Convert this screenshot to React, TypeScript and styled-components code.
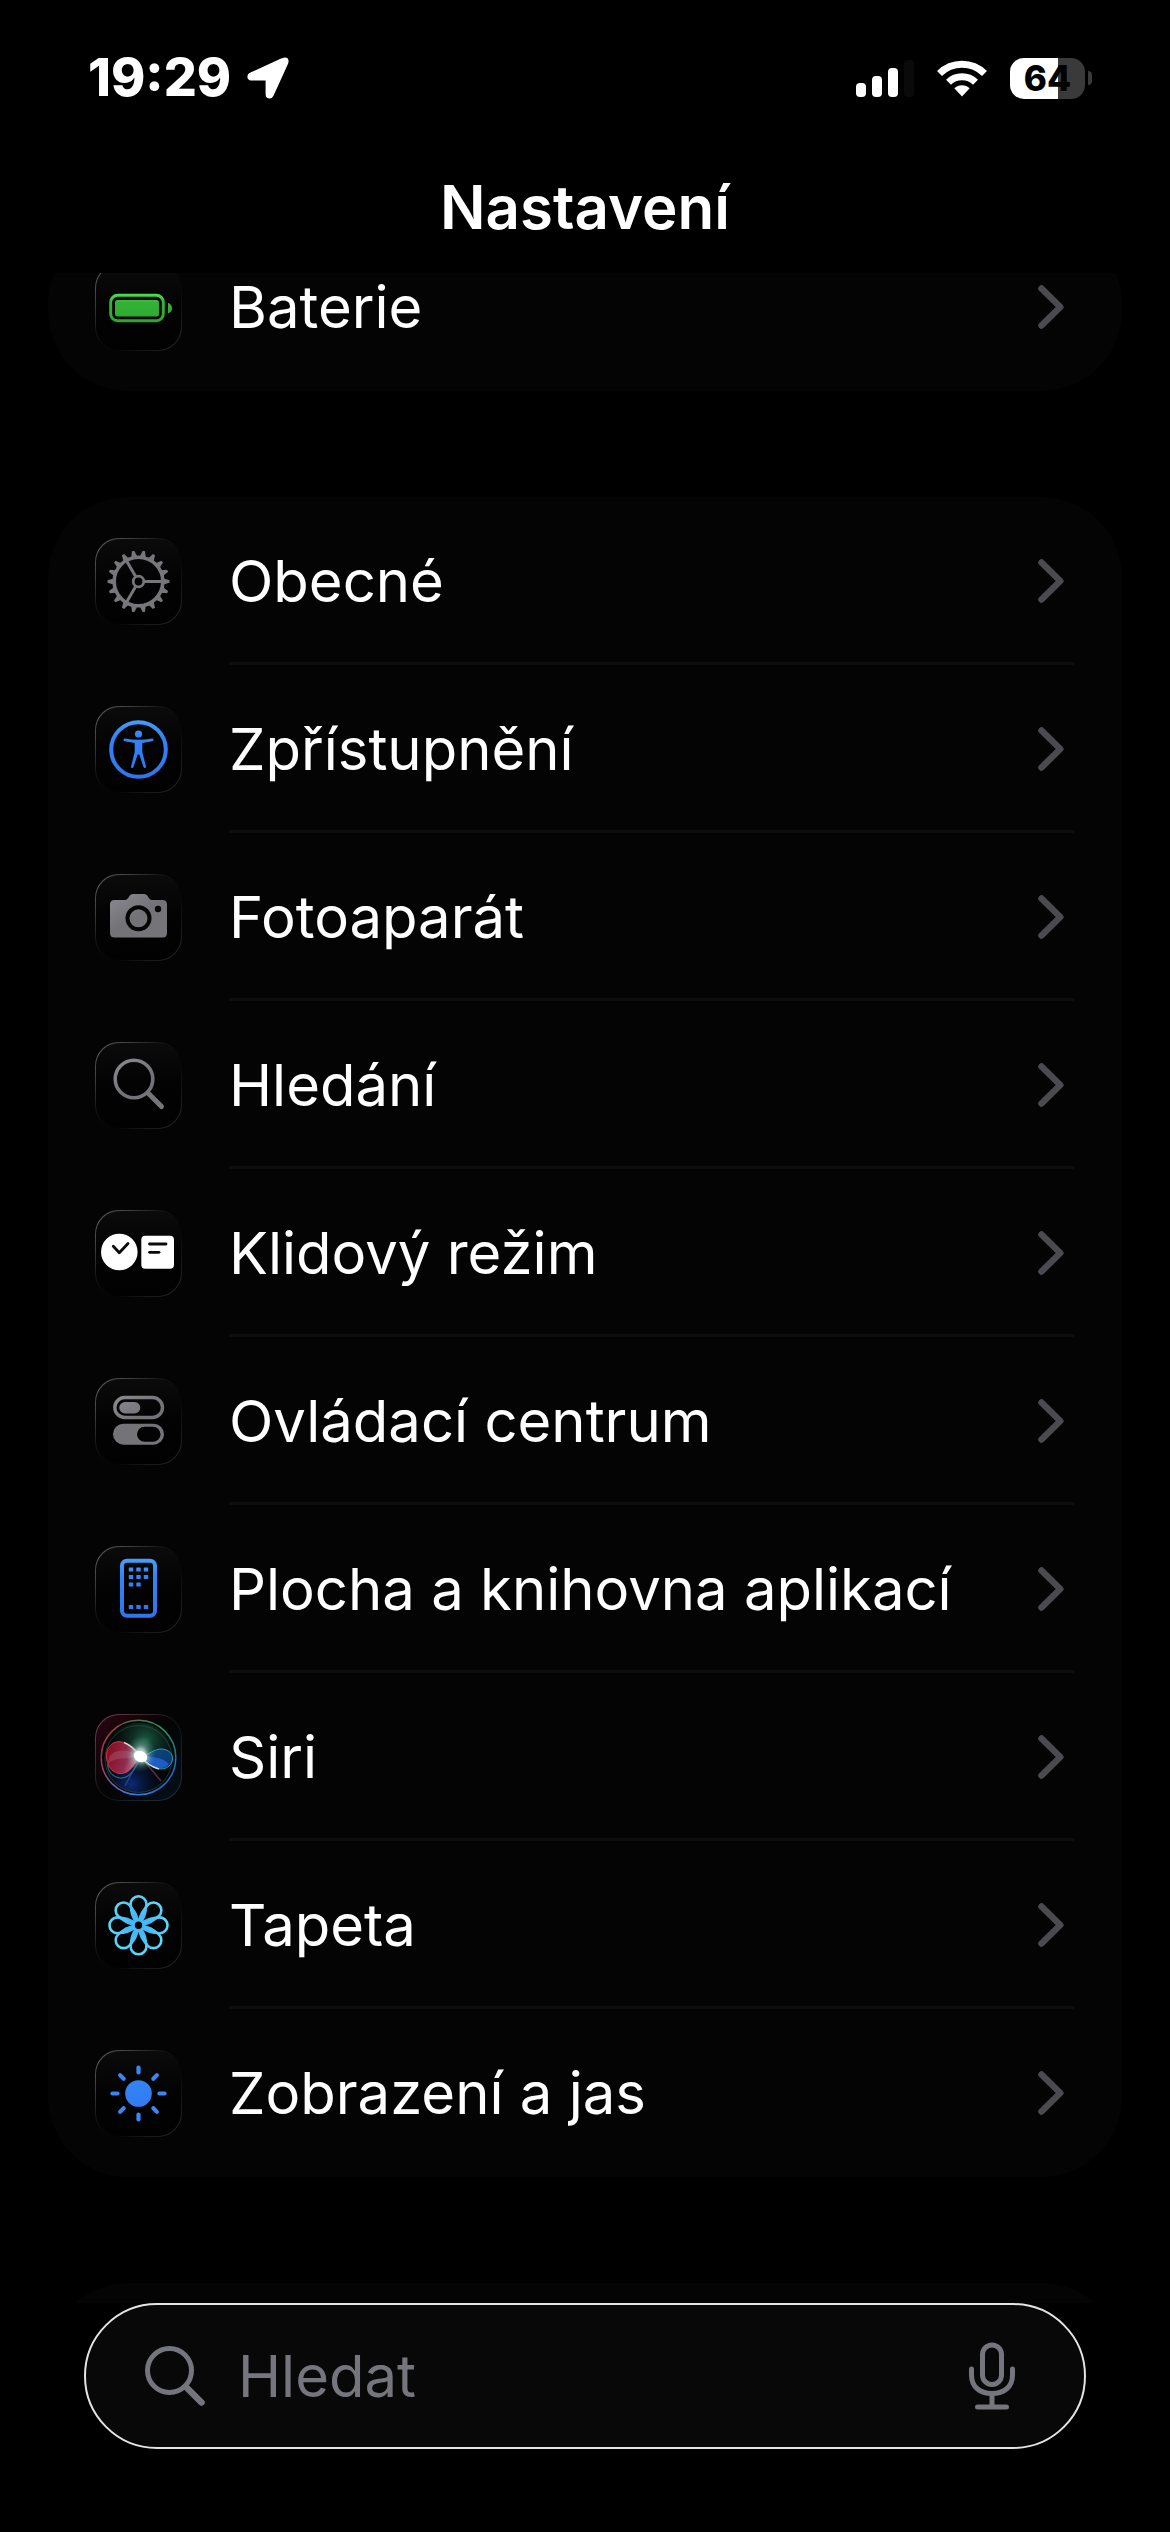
import React from "react";
import styled, { createGlobalStyle } from "styled-components";

const GlobalStyle = createGlobalStyle`
  * { box-sizing: border-box; }
  html, body { margin: 0; background: #000; }
  body { font-family: Inter, "Noto Sans", sans-serif; color: #fff; }
`;

const Screen = styled.div`
  display: grid;
  grid-template-columns: minmax(0, 1fr);
  grid-template-rows: auto minmax(0, 1fr) auto;
  height: 100vh;
  background: #000;
`;

const StatusBar = styled.div`
  display: flex;
  align-items: center;
  justify-content: space-between;
  height: 156px;
  padding: 0 78px 0 88px;
`;

const StatusGroup = styled.div<{ $gap: number }>`
  display: flex;
  align-items: center;
  gap: ${(p) => p.$gap}px;
`;

const Time = styled.time`
  font-size: 52px;
  line-height: 60px;
  font-weight: 800;
`;

const Battery = styled.div`
  display: flex;
  align-items: center;
  gap: 3px;
`;

const BatteryBody = styled.div<{ $level: number }>`
  display: flex;
  align-items: center;
  justify-content: center;
  width: 75px;
  height: 41px;
  border-radius: 14px;
  background: linear-gradient(90deg, #fff ${(p) => p.$level}%, #3a3a3a ${(p) => p.$level}%);
  color: #000;
  font-size: 35px;
  line-height: 40px;
  font-weight: 800;
`;

const BatteryNub = styled.div`
  width: 4px;
  height: 14px;
  border-radius: 0 8px 8px 0;
  background: #3a3a3a;
`;

const Title = styled.h1`
  margin: 0;
  padding: 15px 0 30px;
  font-size: 60px;
  line-height: 72px;
  font-weight: 600;
  text-align: center;
`;

const List = styled.main`
  display: flex;
  flex-direction: column;
  gap: 106px;
  padding: 0 48px;
  overflow: hidden;
`;

const Group = styled.ul<{ $scrolled?: boolean }>`
  flex: none;
  min-height: 168px;
  margin: ${(p) => (p.$scrolled ? "-50px" : "0")} 0 0;
  padding: 0 48px 0 47px;
  border-radius: 80px;
  background: #040404;
  list-style: none;
`;

const RowLink = styled.a`
  display: flex;
  align-items: center;
  gap: 47px;
  color: inherit;
  text-decoration: none;
`;

const RowBody = styled.span<{ $last: boolean }>`
  display: flex;
  flex: 1;
  align-items: center;
  justify-content: space-between;
  height: 168px;
  padding: 3px 10px 0 0;
  border-bottom: 3px solid ${(p) => (p.$last ? "transparent" : "#0d0d0d")};
`;

const Label = styled.span`
  font-size: 58px;
  line-height: 72px;
  font-weight: 400;
`;

const Tile = styled.span<{ $siri: boolean }>`
  flex: none;
  width: 87px;
  height: 87px;
  border: 1px solid transparent;
  border-radius: 24px;
  background: ${(p) =>
    p.$siri
      ? "linear-gradient(135deg, #2a0612 0%, #050304 48%, #04101c 100%) padding-box, linear-gradient(135deg, #7a4454 0%, #0a1512 50%, #1d3344 100%) border-box"
      : "linear-gradient(180deg, #0b0b0b 0%, #030303 45%, #010101 100%) padding-box, linear-gradient(135deg, #6a6a6a 0%, #111 42%, #040404 60%, #2c2c2c 100%) border-box"};

  svg {
    display: block;
    margin: -1px;
  }
`;

const Footer = styled.footer`
  padding: 0 84px 83px;
  background: #000;
`;

const SearchField = styled.label`
  display: flex;
  align-items: center;
  height: 146px;
  padding: 0 68px 0 58px;
  border: 2px solid #e4e4e4;
  border-radius: 73px;
  background: #080808;
`;

const SearchInput = styled.input`
  flex: 1;
  min-width: 0;
  margin: 0 0 0 32px;
  padding: 0;
  border: 0;
  outline: 0;
  background: transparent;
  color: #fff;
  font: 400 58px/72px Inter, "Noto Sans", sans-serif;

  &::placeholder {
    color: #75757e;
    opacity: 1;
  }
`;

const MicButton = styled.button`
  display: flex;
  padding: 0;
  border: 0;
  background: none;
`;

const Defs = styled.svg`
  position: absolute;
`;

const GRAY = "url(#gray)";
const BLUE = "url(#blue)";

const Gradients = () => (
  <Defs width="0" height="0" aria-hidden>
    <defs>
      <linearGradient id="gray" gradientUnits="userSpaceOnUse" x1="20" y1="12" x2="60" y2="75">
        <stop offset="0" stopColor="#8e8d94" />
        <stop offset=".5" stopColor="#737277" />
        <stop offset="1" stopColor="#77767b" />
      </linearGradient>
      <linearGradient id="blue" gradientUnits="userSpaceOnUse" x1="0" y1="12" x2="0" y2="74">
        <stop offset="0" stopColor="#48a0fb" />
        <stop offset=".3" stopColor="#3384f7" />
        <stop offset="1" stopColor="#2f74ec" />
      </linearGradient>
      <linearGradient id="cyan" gradientUnits="userSpaceOnUse" x1="20" y1="12" x2="40" y2="74">
        <stop offset="0" stopColor="#66e6fb" />
        <stop offset=".4" stopColor="#48bdf8" />
        <stop offset="1" stopColor="#3f9fe6" />
      </linearGradient>
      <linearGradient id="green" gradientUnits="userSpaceOnUse" x1="0" y1="30" x2="0" y2="58">
        <stop offset="0" stopColor="#4be04f" />
        <stop offset=".3" stopColor="#33b235" />
        <stop offset="1" stopColor="#2fa632" />
      </linearGradient>
      <linearGradient id="siriRing" gradientUnits="userSpaceOnUse" x1="6" y1="30" x2="70" y2="74">
        <stop offset="0" stopColor="#a8324a" />
        <stop offset=".4" stopColor="#7c56a8" />
        <stop offset=".75" stopColor="#2f7cf0" />
        <stop offset="1" stopColor="#1e6cc0" />
      </linearGradient>
      <linearGradient id="siriRingTop" gradientUnits="userSpaceOnUse" x1="6" y1="40" x2="81" y2="44">
        <stop offset="0" stopColor="#a8324a" />
        <stop offset=".4" stopColor="#5a6a50" />
        <stop offset=".75" stopColor="#2a9c5c" />
        <stop offset="1" stopColor="#1f7a80" />
      </linearGradient>
      <radialGradient id="siriGreen" cx=".6" cy=".25" r=".5">
        <stop offset="0" stopColor="#1a5c42" />
        <stop offset="1" stopColor="#0a2a20" stopOpacity="0" />
      </radialGradient>
      <radialGradient id="siriBlue" cx=".4" cy=".88" r=".45">
        <stop offset="0" stopColor="#0d2a78" />
        <stop offset="1" stopColor="#04102a" stopOpacity="0" />
      </radialGradient>
      <linearGradient id="siriRed" x1="0" y1="0" x2="1" y2="0.3">
        <stop offset="0" stopColor="#9c0a1c" />
        <stop offset=".7" stopColor="#a83058" />
        <stop offset="1" stopColor="#d890a8" />
      </linearGradient>
      <radialGradient id="siriGlow">
        <stop offset="0" stopColor="#fff" />
        <stop offset=".28" stopColor="#fff" stopOpacity=".95" />
        <stop offset=".5" stopColor="#b8ece4" stopOpacity=".5" />
        <stop offset="1" stopColor="#70c0b0" stopOpacity="0" />
      </radialGradient>
    </defs>
  </Defs>
);

const spread = (count: number) => Array.from({ length: count }, (_, i) => (i * 360) / count);

const GLYPHS: Record<string, React.ReactNode> = {
  battery: (
    <g fill="url(#green)">
      <rect x="15.700" y="31.300" width="52.600" height="25.500" rx="7" fill="none" stroke="url(#green)" strokeWidth="3" />
      <rect x="20" y="36" width="44" height="16.500" rx="2.500" />
      <path d="M73 38.700 Q77 40.500 77 44.300 Q77 48 73 49.500 Z" />
    </g>
  ),
  gear: (
    <g transform="translate(43.500 43.500)" fill="none" stroke="#77767b" strokeWidth="3">
      <circle r="24.300" strokeWidth="3.600" />
      <circle r="5.300" strokeWidth="2.800" />
      {spread(3).map((a) => (
        <path key={a} d="M6 0H24" transform={`rotate(${a})`} />
      ))}
      {spread(18).map((a) => (
        <path key={a} d="M25 -3 L31 -1.200 V1.200 L25 3 Z" fill="#77767b" stroke="none" transform={`rotate(${a})`} />
      ))}
    </g>
  ),
  accessibility: (
    <g fill={BLUE}>
      <circle cx="43.500" cy="43.500" r="27.300" fill="none" stroke={BLUE} strokeWidth="4" />
      <circle cx="43.500" cy="28" r="3.600" />
      <path d="M30 32.600 Q43.500 35 57 32.600 Q58.500 32.500 58.500 34 Q58.500 35 57.300 35.200 L47.300 37 V46 L51 60.600 Q51.200 62 50 62 Q49 62.200 48.500 61 L44.300 48.500 H42.700 L38.500 61 Q38 62.200 37 62 Q35.800 62 36 60.600 L39.700 46 V37 L29.700 35.200 Q28.500 35 28.500 34 Q28.500 32.500 30 32.600 Z" />
    </g>
  ),
  camera: (
    <g fill={GRAY}>
      <path d="M19.500 26 H30 Q32 26 33.200 24 L34.400 22 Q35.500 20 38 20 H49 Q51.500 20 52.600 22 L53.800 24 Q55 26 57 26 H67.500 Q72 26 72 30.500 V59 Q72 63.500 67.500 63.500 H19.500 Q15 63.500 15 59 V30.500 Q15 26 19.500 26 Z" />
      <circle cx="43.500" cy="44.300" r="11" fill="none" stroke="#050505" strokeWidth="4" />
      <circle cx="63" cy="35" r="3.200" fill="#050505" />
    </g>
  ),
  search: (
    <g fill="none" stroke={GRAY} strokeLinecap="round">
      <circle cx="39" cy="37" r="18.800" strokeWidth="3.600" />
      <path d="M53 51 L66.500 64.500" strokeWidth="5" />
    </g>
  ),
  standby: (
    <g fill="#fff">
      <circle cx="24.300" cy="42" r="18.300" />
      <rect x="46.300" y="25.700" width="32.700" height="33" rx="4" />
      <g fill="none" stroke="#0a0a0a" strokeWidth="2.800" strokeLinecap="round" strokeLinejoin="round">
        <path d="M18.300 36.300 L24.300 42.700 L33 33.500" />
        <path d="M54.500 34 H71" />
        <path d="M54.500 42.300 H64" />
      </g>
    </g>
  ),
  toggles: (
    <g fill={GRAY}>
      <rect x="19.800" y="19.500" width="47.700" height="20" rx="10" fill="none" stroke={GRAY} strokeWidth="3.400" />
      <rect x="24.300" y="24" width="21" height="11.500" rx="5.750" />
      <rect x="18" y="45.700" width="51" height="21" rx="10.500" />
      <rect x="42" y="48.700" width="23.500" height="15" rx="7.500" fill="#030303" />
    </g>
  ),
  phone: (
    <g fill={BLUE}>
      <rect x="27" y="14.700" width="33" height="55" rx="5" fill="none" stroke={BLUE} strokeWidth="4" />
      {[
        [36, 23.5], [43.5, 23.5], [51, 23.5],
        [36, 31], [43.5, 31], [51, 31],
        [36, 38.5], [43.5, 38.5],
        [36, 61], [43.5, 61], [51, 61],
      ].map(([x, y]) => (
        <rect key={`${x}-${y}`} x={x - 2.2} y={y - 2.1} width="4.400" height="4.200" rx=".6" />
      ))}
    </g>
  ),
  siri: (
    <g fill="none">
      <circle cx="43.500" cy="43.500" r="37.500" fill="#040608" />
      <circle cx="43.500" cy="43.500" r="35" fill="url(#siriGreen)" />
      <circle cx="43.500" cy="43.500" r="35" fill="url(#siriBlue)" />
      <circle cx="43.500" cy="45" r="33.500" stroke="#2a6a58" strokeWidth="1" opacity=".5" />
      <path d="M6.200 43.500 A37.300 37.300 0 0 0 80.800 43.500" stroke="url(#siriRing)" strokeWidth="1.500" />
      <path d="M6.200 43.500 A37.300 37.300 0 0 1 80.800 43.500" stroke="url(#siriRingTop)" strokeWidth="1.500" />
      <path d="M45.500 42.500 C40 57 34 65 25 64 C18 63 13 58 12.500 50" stroke="#3a8a98" strokeWidth="1.200" opacity=".7" />
      <path d="M45.500 42.500 C38 33 31 27.700 24 27.700 C16 27.700 10.500 35 11.500 44 C12.500 53 18 59.500 26 59.500 C35 59.500 40 50 45.500 42.500 Z" fill="url(#siriRed)" fillOpacity=".85" stroke="#d8304c" strokeWidth="1" />
      <path d="M45.500 42.500 C37 36 26 35 20 38 C14 41 13 46 13 50 C20 42 32 46 45.500 42.500 Z" fill="#c89ab0" fillOpacity=".22" />
      <path d="M45.500 42.500 C54 41 59 34.500 67 35 C74 35.500 78 40 77.500 45 C77 51 72 55 66 55 C58 55 52 48 45.500 42.500 Z" fill="#1050a0" fillOpacity=".7" stroke="#2a98b8" strokeWidth="1" />
      <path d="M45.500 42.500 C56 43 66 42 74 50 C70 55 62 55 57 51 Z" fill="#2468e0" fillOpacity=".75" />
      <path d="M45.500 42.500 L30 72" stroke="#4060c0" strokeOpacity=".5" strokeWidth="1.500" />
      <path d="M45.500 42.500 L66 67" stroke="#b05080" strokeOpacity=".5" strokeWidth="1.500" />
      <path d="M29 28.500 Q38 32 45.500 42.500 Q53 52 64 55" stroke="#fff" strokeWidth="1.500" opacity=".75" />
      <ellipse cx="45.700" cy="40" rx="15" ry="18" fill="url(#siriGlow)" opacity=".7" />
      <ellipse cx="45.500" cy="42.500" rx="11" ry="9" fill="url(#siriGlow)" transform="rotate(25 45.500 42.500)" />
      <ellipse cx="45.500" cy="42.500" rx="7" ry="5.500" fill="#fff" transform="rotate(25 45.500 42.500)" />
    </g>
  ),
  flower: (
    <g fill="none" stroke="url(#cyan)" strokeWidth="2.600">
      <circle cx="43.500" cy="43.300" r="5.200" strokeWidth="3" />
      {spread(8).map((a) => (
        <path
          key={a}
          d="M42 38.500 C39.500 33.500 35.600 28 35.600 22.200 A7.900 7.900 0 0 1 51.400 22.200 C51.400 28 47.500 33.500 45 38.500"
          transform={`rotate(${a} 43.500 43.300)`}
        />
      ))}
      {spread(8).map((a) => (
        <path key={a} d="M35.600 22.200 C35.600 31 37 34 40.500 40 M51.400 22.200 C51.400 31 50 34 46.500 40" strokeWidth="1.800" transform={`rotate(${a} 43.500 43.300)`} />
      ))}
    </g>
  ),
  sun: (
    <g stroke="#3a86f5" strokeWidth="4.200" strokeLinecap="round">
      <circle cx="43.500" cy="43.500" r="13.300" fill={BLUE} stroke="none" />
      {spread(8).map((a) => (
        <path key={a} d="M43.500 17.500 V22.500" transform={`rotate(${a} 43.500 43.500)`} />
      ))}
    </g>
  ),
};

const Chevron = () => (
  <svg width="26" height="44" viewBox="0 0 26 44" fill="none" stroke="#4a4a50" strokeWidth="6.500" strokeLinecap="round" strokeLinejoin="round" aria-hidden>
    <path d="M3.500 3.500 L22.300 22 L3.500 40.500" />
  </svg>
);

type Item = { icon: string; label: string };

const SYSTEM: Item[] = [
  { icon: "gear", label: "Obecné" },
  { icon: "accessibility", label: "Zpřístupnění" },
  { icon: "camera", label: "Fotoaparát" },
  { icon: "search", label: "Hledání" },
  { icon: "standby", label: "Klidový režim" },
  { icon: "toggles", label: "Ovládací centrum" },
  { icon: "phone", label: "Plocha a knihovna aplikací" },
  { icon: "siri", label: "Siri" },
  { icon: "flower", label: "Tapeta" },
  { icon: "sun", label: "Zobrazení a jas" },
];

const Row = ({ icon, label, last }: Item & { last: boolean }) => (
  <li>
    <RowLink href={`#${icon}`}>
      <Tile $siri={icon === "siri"}>
        <svg width="87" height="87" viewBox="0 0 87 87" aria-hidden>
          {GLYPHS[icon]}
        </svg>
      </Tile>
      <RowBody $last={last}>
        <Label>{label}</Label>
        <Chevron />
      </RowBody>
    </RowLink>
  </li>
);

const App = () => (
  <Screen>
    <GlobalStyle />
    <Gradients />
    <header>
      <StatusBar>
        <StatusGroup $gap={16}>
          <Time>19:29</Time>
          <svg width="42" height="42" viewBox="0 0 42 42" fill="#fff" aria-hidden>
            <path d="M36.500 0.700 Q42 -0.500 41.500 5 Q41.300 6.200 40.800 7.300 L26.500 38.700 Q25 41.800 22 41.500 Q18.600 41 18.600 37 V23.500 H4 Q0.800 23.300 0.400 20 Q0.300 17 3.500 15.600 L34 1.600 Q35.300 1 36.500 0.700 Z" />
          </svg>
        </StatusGroup>
        <StatusGroup $gap={23}>
          <svg width="58" height="38" viewBox="0 0 58 38" fill="#fff" aria-hidden>
            <rect x="0" y="24" width="10" height="14" rx="4" />
            <rect x="16" y="17" width="10" height="21" rx="4" />
            <rect x="32" y="9" width="10" height="29" rx="4" />
            <rect x="48" y="1" width="10" height="37" rx="4" fill="#0a0a0a" />
          </svg>
          <svg width="50" height="38" viewBox="0 0 50 38" aria-hidden>
            <g fill="none" stroke="#fff" strokeWidth="7">
              <path d="M2.500 14.500 A32 32 0 0 1 47.500 14.500" />
              <path d="M11.500 23.200 A19.500 19.500 0 0 1 38.500 23.200" />
            </g>
            <path d="M17.300 29.300 A11 11 0 0 1 32.700 29.300 L25 37.500 Z" fill="#fff" />
          </svg>
          <Battery>
            <BatteryBody $level={64}>64</BatteryBody>
            <BatteryNub />
          </Battery>
        </StatusGroup>
      </StatusBar>
      <Title>Nastavení</Title>
    </header>

    <List>
      <Group $scrolled>
        <Row icon="battery" label="Baterie" last />
      </Group>
      <Group>
        {SYSTEM.map((item, i) => (
          <Row key={item.icon} {...item} last={i === SYSTEM.length - 1} />
        ))}
      </Group>
      <Group />
    </List>

    <Footer>
      <SearchField>
        <svg width="62" height="62" viewBox="0 0 62 62" fill="none" stroke="#75757e" strokeLinecap="round" aria-hidden>
          <circle cx="25.500" cy="25.500" r="22" strokeWidth="5" />
          <path d="M42 42 L57.500 57.500" strokeWidth="6.500" />
        </svg>
        <SearchInput type="text" placeholder="Hledat" aria-label="Hledat" />
        <MicButton type="button" aria-label="Diktovat">
          <svg width="48" height="68" viewBox="0 0 48 68" fill="none" stroke="#75757e" strokeWidth="5" strokeLinecap="round" aria-hidden>
            <rect x="14.500" y="3" width="19" height="39.500" rx="9.500" />
            <path d="M3.500 27 V33 C3.500 45 12 51.500 24 51.500 C36 51.500 44.500 45 44.500 33 V27" />
            <path d="M24 52 V64 M9.500 65 H38.500" />
          </svg>
        </MicButton>
      </SearchField>
    </Footer>
  </Screen>
);

export default App;
